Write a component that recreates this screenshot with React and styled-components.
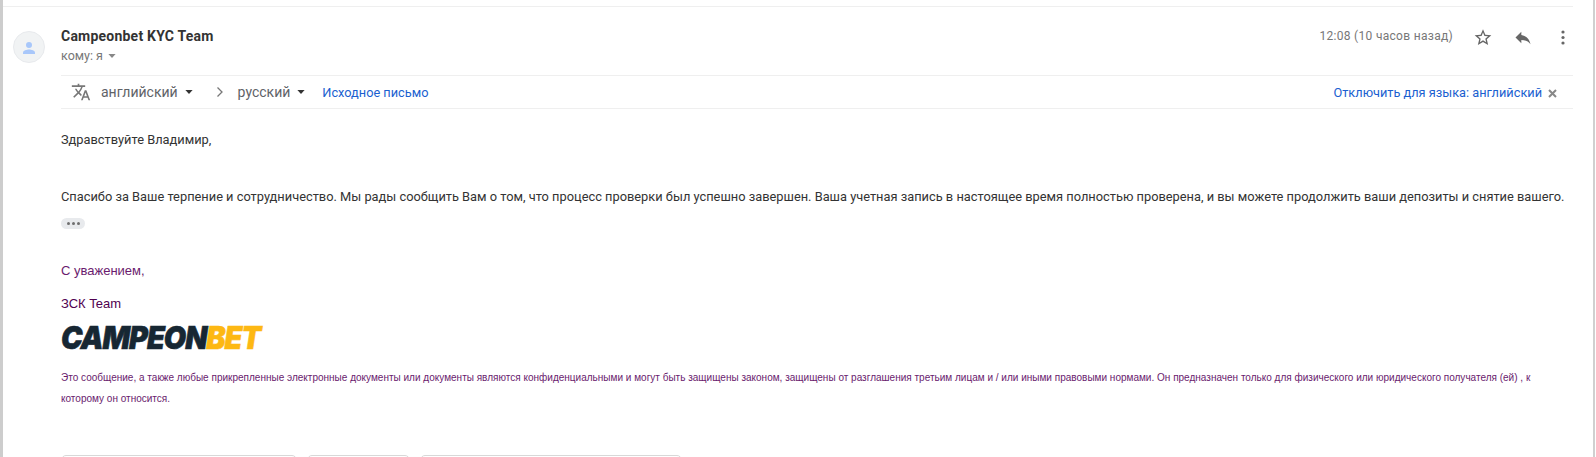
import React from "react";
import styled, { createGlobalStyle } from "styled-components";

const Global = createGlobalStyle`
  html, body { margin: 0; padding: 0; background: #fff; overflow: hidden; }
  body { font-family: Roboto, "Liberation Sans", Arial, sans-serif; }
`;

const Page = styled.div`
  width: 1596px; height: 457px; box-sizing: border-box; overflow: hidden;
  display: flex; background: #fff;
`;
const LeftEdge = styled.div`width: 3px; background: #cdcdcd; flex: none;`;
const RightEdge = styled.div`width: 3px; box-sizing: border-box; background: #fff; border-left: 2px solid #d0d0d0; flex: none;`;
const Main = styled.div`flex: 1; min-width: 0; display: flex; flex-direction: column; padding: 6px 20px 0 0;`;
const TopRule = styled.div`height: 1px; background: #efefef; flex: none;`;
const Message = styled.div`display: flex; padding-left: 10px; margin-top: 17px;`;
const AvatarCol = styled.div`width: 48px; flex: none; padding-top: 7px;`;
const Avatar = styled.div`
  width: 32px; height: 32px; box-sizing: border-box; border-radius: 50%;
  background: #f1f3f4; border: 1px solid #e8eaed;
  display: flex; align-items: center; justify-content: center; padding-top: 2px;
`;
const Content = styled.div`flex: 1; min-width: 0;`;
const Header = styled.div`display: flex; justify-content: space-between; height: 51px;`;
const Who = styled.div`display: flex; flex-direction: column;`;
const Sender = styled.div`font-size: 14px; font-weight: 700; color: #333; line-height: 20px; margin-top: 2px; letter-spacing: .22px;`;
const To = styled.div`font-size: 12.500px; color: #777; line-height: 16px; margin-top: 2px; display: flex; align-items: center; gap: 5px;`;
const Meta = styled.div`display: flex; align-items: flex-start; padding-top: 4px; gap: 20px;`;
const Time = styled.div`font-size: 12px; color: #777; line-height: 16px; letter-spacing: .3px;`;
const IconSlot = styled.div`width: 20px; height: 18px; display: flex; align-items: center; justify-content: center; flex: none;`;
const Translate = styled.div`
  height: 32px; display: flex; align-items: center; font-size: 14px;
  border-top: 1px solid #efefef; border-bottom: 1px solid #efefef;
`;
const TIcon = styled.span`display: flex; margin: 0 10px;`;
const Lang = styled.span`color: #5f6368; margin-right: ${p => p.$mr}px; display: flex; align-items: center; gap: 7px;`;
const Chevron = styled.span`display: flex; margin-right: 13px;`;
const BlueLink = styled.a`color: #1a5fd0; font-size: 12.750px; text-decoration: none;`;
const Spacer = styled.div`flex: 1;`;
const Close = styled.span`display: flex; margin: 2px 16px 0 6px;`;
const Body = styled.div`padding-top: 22px; font-size: 12.830px; color: #333;`;
const Line = styled.div`line-height: 18px; white-space: nowrap; margin-bottom: ${p => p.$mb || 0}px;`;
const Dots = styled.div`
  width: 24px; height: 11px; border-radius: 6px; background: #e8eaed; margin-top: 12px;
  display: flex; align-items: center; justify-content: center; gap: 2px;
`;
const Dot = styled.i`width: 3px; height: 3px; border-radius: 50%; background: #6f6f6f; display: block;`;
const Regards = styled.div`color: #6a1b6e; font-size: 13px; line-height: 18px; margin-top: 33px; font-family: "Liberation Sans", Arial, sans-serif;`;
const Team = styled.div`color: #500050; font-size: 13px; line-height: 18px; margin-top: 15px; font-family: "Liberation Sans", Arial, sans-serif;`;
const Logo = styled.div`
  font-family: Inter, Roboto, sans-serif; font-weight: 900; font-style: italic;
  font-size: 31px; line-height: 26px; height: 26px; margin-top: 12px; white-space: nowrap;
  letter-spacing: -1.100px; color: #172733;
  transform-origin: left center; transform: scaleX(.93);
  -webkit-text-stroke: .6px currentColor;
`;
const LogoBet = styled.span`color: #fdb813;`;
const Legal = styled.div`
  color: #6a1b6e; font-size: 10.020px; line-height: 20.500px; margin-top: 17px; font-family: "Liberation Sans", Arial, sans-serif;
`;
const Chips = styled.div`display: flex; gap: 10px; margin-top: 46px;`;
const Chip = styled.div`width: ${p => p.$w}px; height: 30px; box-sizing: border-box; border: 1px solid #d8d8d8; border-radius: 5px 5px 0 0; flex: none;`;

export default function App() {
  return (
    <Page>
      <Global />
      <LeftEdge />
      <Main>
        <TopRule />
        <Message>
          <AvatarCol>
            <Avatar>
              <svg width="16" height="16" viewBox="0 0 16 16"><circle cx="8" cy="5" r="3" fill="#a8c7fa" /><path d="M2 14v-1.600C2 10.400 5.600 9.400 8 9.400s6 1 6 3V14z" fill="#a8c7fa" /></svg>
            </Avatar>
          </AvatarCol>
          <Content>
            <Header>
              <Who>
                <Sender>Campeonbet KYC Team</Sender>
                <To>кому: я
                  <svg width="8" height="4" viewBox="0 0 9 5"><path d="M0 0h9L4.500 5z" fill="#888" /></svg>
                </To>
              </Who>
              <Meta>
                <Time>12:08 (10 часов назад)</Time>
                <IconSlot>
                  <svg width="21" height="21" viewBox="0 0 24 24"><path d="M22 9.240l-7.190-.620L12 2 9.190 8.630 2 9.240l5.460 4.730L5.820 21 12 17.270 18.180 21l-1.630-7.030L22 9.240zM12 15.400l-3.760 2.270 1-4.280-3.320-2.880 4.380-.380L12 6.100l1.710 4.040 4.380.380-3.320 2.880 1 4.280L12 15.400z" fill="#666" /></svg>
                </IconSlot>
                <IconSlot>
                  <svg width="21" height="21" viewBox="0 0 24 24"><path d="M10 9V5l-7 7 7 7v-4.100c5 0 8.500 1.600 11 5.100-1-5-4-10-11-11z" fill="#666" /></svg>
                </IconSlot>
                <IconSlot>
                  <svg width="4" height="15" viewBox="0 0 4 15"><circle cx="2" cy="2" r="1.600" fill="#666" /><circle cx="2" cy="7.500" r="1.600" fill="#666" /><circle cx="2" cy="13" r="1.600" fill="#666" /></svg>
                </IconSlot>
              </Meta>
            </Header>
            <Translate>
              <TIcon>
                <svg width="20" height="20" viewBox="0 0 24 24"><path d="M12.870 15.070l-2.540-2.510.03-.03c1.740-1.940 2.980-4.170 3.710-6.530H17V4h-7V2H8v2H1v1.990h11.170C11.500 7.920 10.440 9.750 9 11.350 8.070 10.320 7.300 9.190 6.690 8h-2c.73 1.630 1.730 3.170 2.980 4.560l-5.090 5.020L4 19l5-5 3.110 3.110.76-2.040zM18.500 10h-2L12 22h2l1.120-3h4.750L21 22h2l-4.500-12zm-2.620 7l1.620-4.330L19.120 17h-3.240z" fill="#777" /></svg>
              </TIcon>
              <Lang $mr={22}>английский
                <svg width="8" height="4" viewBox="0 0 9 5"><path d="M0 0h9L4.500 5z" fill="#333" /></svg>
              </Lang>
              <Chevron>
                <svg width="10" height="12" viewBox="0 0 10 12"><path d="M2.500 1.500L7 6l-4.500 4.500" fill="none" stroke="#777" strokeWidth="1.300" /></svg>
              </Chevron>
              <Lang $mr={17}>русский
                <svg width="8" height="4" viewBox="0 0 9 5"><path d="M0 0h9L4.500 5z" fill="#333" /></svg>
              </Lang>
              <BlueLink>Исходное письмо</BlueLink>
              <Spacer />
              <BlueLink>Отключить для языка: английский</BlueLink>
              <Close>
                <svg width="9" height="9" viewBox="0 0 9 9"><path d="M1 1l7 7M8 1L1 8" stroke="#888" strokeWidth="2" /></svg>
              </Close>
            </Translate>
            <Body>
              <Line $mb={39}>Здравствуйте Владимир,</Line>
              <Line>Спасибо за Ваше терпение и сотрудничество. Мы рады сообщить Вам о том, что процесс проверки был успешно завершен. Ваша учетная запись в настоящее время полностью проверена, и вы можете продолжить ваши депозиты и снятие вашего.</Line>
              <Dots><Dot /><Dot /><Dot /></Dots>
              <Regards>С уважением,</Regards>
              <Team>ЗСК Team</Team>
              <Logo>CAMPEON<LogoBet>BET</LogoBet></Logo>
              <Legal>Это сообщение, а также любые прикрепленные электронные документы или документы являются конфиденциальными и могут быть защищены законом, защищены от разглашения третьим лицам и / или иными правовыми нормами. Он предназначен только для физического или юридического получателя (ей) , к которому он относится.</Legal>
              <Chips>
                <Chip $w={236} />
                <Chip $w={103} />
                <Chip $w={262} />
              </Chips>
            </Body>
          </Content>
        </Message>
      </Main>
      <RightEdge />
    </Page>
  );
}
